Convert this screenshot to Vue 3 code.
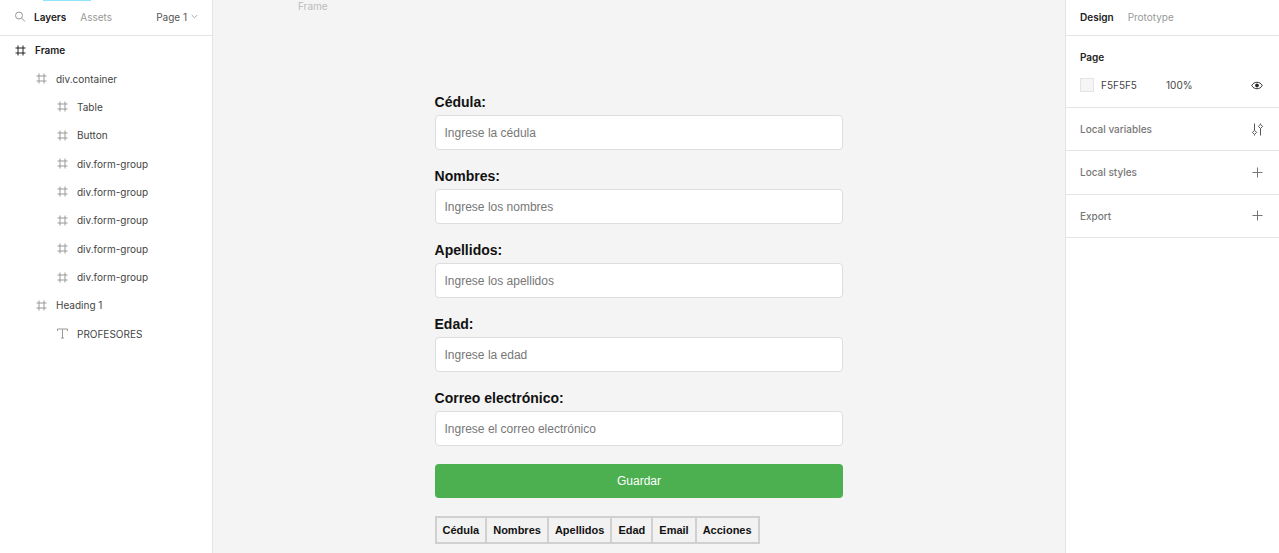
<script setup>
const layers = [
  { name: 'Frame', depth: 0, icon: 'frame' },
  { name: 'div.container', depth: 1, icon: 'frame' },
  { name: 'Table', depth: 2, icon: 'frame' },
  { name: 'Button', depth: 2, icon: 'frame' },
  { name: 'div.form-group', depth: 2, icon: 'frame' },
  { name: 'div.form-group', depth: 2, icon: 'frame' },
  { name: 'div.form-group', depth: 2, icon: 'frame' },
  { name: 'div.form-group', depth: 2, icon: 'frame' },
  { name: 'div.form-group', depth: 2, icon: 'frame' },
  { name: 'Heading 1', depth: 1, icon: 'frame' },
  { name: 'PROFESORES', depth: 2, icon: 'text' },
]

const fields = [
  { id: 'cedula', label: 'Cédula:', hint: 'Ingrese la cédula' },
  { id: 'nombres', label: 'Nombres:', hint: 'Ingrese los nombres' },
  { id: 'apellidos', label: 'Apellidos:', hint: 'Ingrese los apellidos' },
  { id: 'edad', label: 'Edad:', hint: 'Ingrese la edad' },
  { id: 'correo', label: 'Correo electrónico:', hint: 'Ingrese el correo electrónico' },
]

const columns = ['Cédula', 'Nombres', 'Apellidos', 'Edad', 'Email', 'Acciones']
</script>

<template>
  <div class="editor">
    <aside class="panel left">
      <span class="accent"></span>
      <header class="bar">
        <button class="icon-btn search" type="button" aria-label="Buscar">
          <svg width="12" height="12" viewBox="0 0 12 12" fill="none" stroke="#999">
            <circle cx="5" cy="4.500" r="3.500" />
            <path d="M7.500 7 11 10.500" />
          </svg>
        </button>
        <button class="tab active" type="button">Layers</button>
        <button class="tab" type="button">Assets</button>
        <button class="tab page" type="button">
          Page 1
          <svg width="7" height="5" viewBox="0 0 7 5" fill="none" stroke="#aaa">
            <path d="M.7 1 3.5 3.8 6.3 1" />
          </svg>
        </button>
      </header>
      <ul class="layers">
        <li v-for="(layer, i) in layers" :key="i">
          <button class="layer" :class="'depth-' + layer.depth" type="button">
            <svg v-if="layer.icon === 'frame'" width="11" height="11" viewBox="0 0 11 11" fill="none" stroke="currentColor">
              <path d="M3 .5v10M8 .5v10M.5 3h10M.5 8h10" />
            </svg>
            <svg v-else width="11" height="11" viewBox="0 0 11 11" fill="none" stroke="currentColor">
              <path d="M.5 3V1h10v2M5.5 1v9M4 10h3" />
            </svg>
            <span>{{ layer.name }}</span>
          </button>
        </li>
      </ul>
    </aside>

    <main class="canvas">
      <span class="frame-name">Frame</span>
      <form class="form" @submit.prevent>
        <div v-for="f in fields" :key="f.id" class="form-group">
          <label :for="f.id">{{ f.label }}</label>
          <input :id="f.id" type="text" :placeholder="f.hint" />
        </div>
        <button class="save" type="submit">Guardar</button>
        <table>
          <thead>
            <tr>
              <th v-for="c in columns" :key="c" scope="col">{{ c }}</th>
            </tr>
          </thead>
        </table>
      </form>
    </main>

    <aside class="panel right">
      <header class="bar">
        <button class="tab active" type="button">Design</button>
        <button class="tab" type="button">Prototype</button>
      </header>
      <section class="page-fill">
        <h2>Page</h2>
        <div class="fill-row">
          <span class="swatch"></span>
          <input class="hex" type="text" value="F5F5F5" aria-label="Color" />
          <input class="opacity" type="text" value="100%" aria-label="Opacidad" />
          <button class="icon-btn" type="button" aria-label="Visible">
            <svg width="12" height="9" viewBox="0 0 13 9" fill="none" stroke="#222">
              <path d="M.8 4.5C2 2.2 4 1 6.5 1s4.500 1.200 5.700 3.500C11 6.800 9 8 6.500 8S2 6.800.8 4.500Z" />
              <circle cx="6.500" cy="4.500" r="1.600" fill="#222" />
            </svg>
          </button>
        </div>
      </section>
      <div class="rows">
        <section class="row">
          <h3>Local variables</h3>
          <button class="icon-btn" type="button" aria-label="Variables">
            <svg width="13" height="13" viewBox="0 0 13 13" fill="none" stroke="#555">
              <path d="M3.500.5v7M3.500 11.500v1M9.500 12.500v-7M9.500 1.500v-1" />
              <path d="m3.500 7.300 2.100 2.100-2.100 2.100-2.100-2.100ZM9.500 1.300l2.100 2.100-2.100 2.100-2.100-2.100Z" />
            </svg>
          </button>
        </section>
        <section v-for="title in ['Local styles', 'Export']" :key="title" class="row">
          <h3>{{ title }}</h3>
          <button class="icon-btn" type="button" :aria-label="'Añadir: ' + title">
            <svg width="11" height="11" viewBox="0 0 11 11" fill="none" stroke="#777">
              <path d="M5.500.5v10M.5 5.500h10" />
            </svg>
          </button>
        </section>
      </div>
    </aside>
  </div>
</template>

<style>
body {
  background: #f4f4f4;
}
</style>

<style scoped>
.editor {
  display: grid;
  grid-template-columns: 213px minmax(0, 1fr) 214px;
  height: 100vh;
  overflow: hidden;
  background: #f4f4f4;
  font-family: Inter, "Liberation Sans", sans-serif;
  font-size: 10px;
  color: #444;
}

.editor *,
.editor *::before {
  box-sizing: border-box;
}

button,
input {
  margin: 0;
  padding: 0;
  border: 0;
  background: none;
  font: inherit;
  color: inherit;
}

svg {
  display: block;
  flex: none;
}

.panel {
  position: relative;
  background: #fff;
}

.left {
  border-right: 1px solid #e4e4e4;
}

.right {
  border-left: 1px solid #e4e4e4;
}

.accent {
  position: absolute;
  top: 0;
  left: 43px;
  width: 48px;
  height: 1px;
  background: #8fe3fb;
}

.bar {
  display: flex;
  align-items: center;
  gap: 14px;
  height: 36px;
  padding: 0 14px 2px;
  border-bottom: 1px solid #e4e4e4;
}

.search {
  margin-right: -6px;
}

.tab {
  color: #999;
}

.tab.active {
  font-weight: 600;
  color: #222;
}

.tab.page {
  display: flex;
  align-items: center;
  gap: 4px;
  margin-left: auto;
  color: #555;
}

.layers {
  display: grid;
  grid-auto-rows: 1fr;
  height: 312px;
  margin: 0;
  padding: 0;
  list-style: none;
}

.layer {
  display: flex;
  align-items: center;
  gap: 9px;
  width: 100%;
  height: 100%;
  text-align: left;
}

.layer svg {
  color: #999;
}

.depth-0 {
  padding-left: 15px;
  font-weight: 600;
  color: #222;
}

.depth-0 svg {
  color: #222;
}

.depth-1 {
  padding-left: 36px;
}

.depth-2 {
  padding-left: 57px;
}

.canvas {
  position: relative;
  padding-top: 94px;
}

.frame-name {
  position: absolute;
  top: 0;
  left: 85px;
  line-height: 12px;
  color: #bbb;
}

.form {
  width: 48%;
  margin: 0 auto;
  font-family: "Liberation Sans", Arial, sans-serif;
}

.form-group {
  margin-bottom: 18px;
}

.form-group label {
  display: block;
  margin-bottom: 4px;
  font-size: 14px;
  font-weight: 700;
  line-height: 17px;
  color: #111;
}

.form-group input,
.save {
  display: block;
  width: 100%;
  border-radius: 4px;
  font-size: 12px;
}

.form-group input {
  height: 35px;
  padding: 0 9px;
  border: 1px solid #ddd;
  background: #fff;
}

.form-group input::placeholder {
  color: #777;
  opacity: 1;
}

.save {
  height: 34px;
  margin-bottom: 18px;
  background: #4caf50;
  text-align: center;
  color: #fff;
}

table {
  border: 1px solid #d0d0d0;
  border-spacing: 0;
}

th {
  height: 26px;
  padding: 0 6px;
  border: 1px solid #d0d0d0;
  background: #f2f2f2;
  font-size: 11px;
  font-weight: 700;
  color: #111;
}

.page-fill {
  height: 72px;
  padding: 14px 14px 0;
  border-bottom: 1px solid #e4e4e4;
}

h2,
h3 {
  margin: 0;
  font-size: 10px;
  line-height: 14px;
}

h2 {
  font-weight: 600;
  color: #222;
}

h3 {
  font-weight: 500;
  color: #777;
}

.fill-row {
  display: flex;
  align-items: center;
  margin-top: 14px;
}

.swatch {
  width: 14px;
  height: 14px;
  border: 1px solid #e4e4e4;
  background: #f5f5f5;
}

.hex {
  width: 58px;
  margin: 0 0 0 7px;
}

.opacity {
  width: 40px;
  margin-left: 7px;
}

.fill-row .icon-btn {
  margin-left: auto;
}

.rows {
  display: grid;
  grid-auto-rows: 1fr;
  height: 130px;
}

.row {
  display: flex;
  align-items: center;
  justify-content: space-between;
  padding: 0 14px;
  border-bottom: 1px solid #e4e4e4;
}

.right .icon-btn {
  display: grid;
  place-items: center;
  width: 14px;
  height: 14px;
  margin-right: 1px;
}
</style>
